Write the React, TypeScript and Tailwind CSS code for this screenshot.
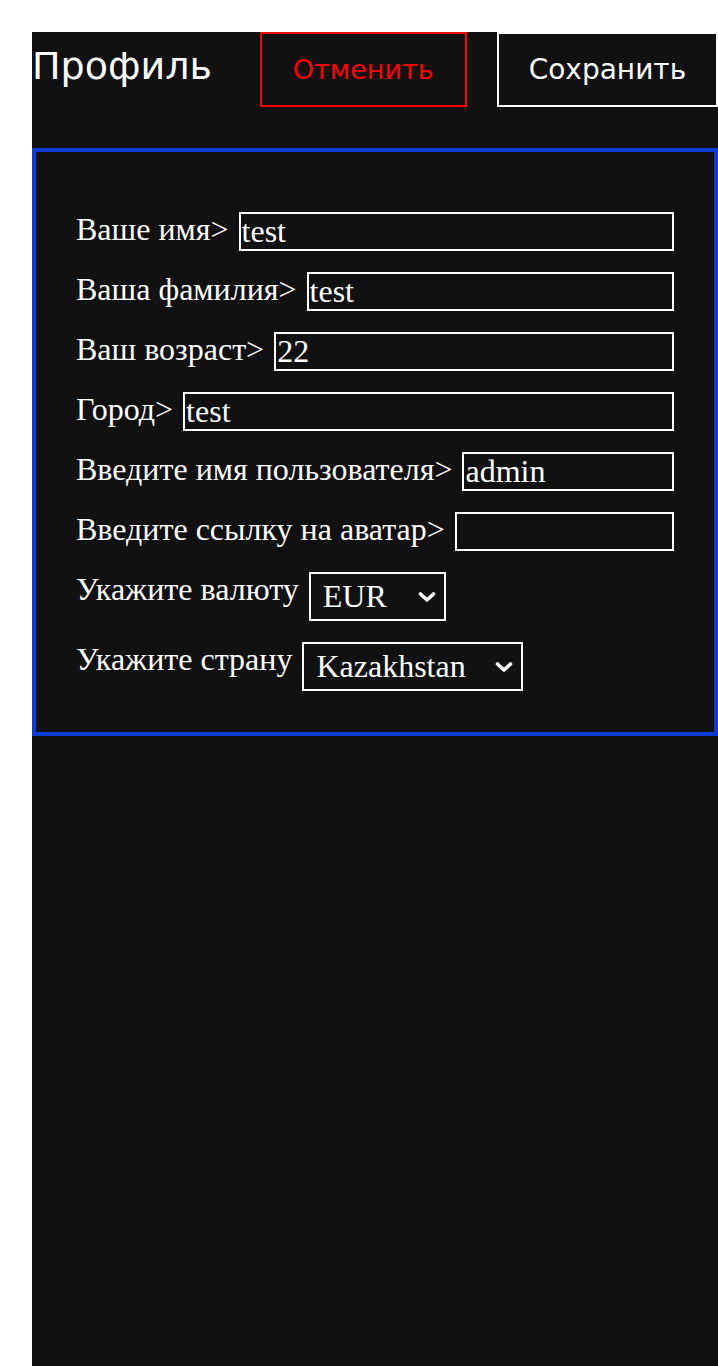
import { useState } from 'react';

interface Field {
  id: string;
  label: string;
  value: string;
}

const initialFields: Field[] = [
  { id: 'firstName', label: 'Ваше имя>', value: 'test' },
  { id: 'lastName', label: 'Ваша фамилия>', value: 'test' },
  { id: 'age', label: 'Ваш возраст>', value: '22' },
  { id: 'city', label: 'Город>', value: 'test' },
  { id: 'username', label: 'Введите имя пользователя>', value: 'admin' },
  { id: 'avatar', label: 'Введите ссылку на аватар>', value: '' },
];

const currencies = ['EUR', 'USD', 'KZT', 'RUB'];
const countries = ['Kazakhstan', 'Russia', 'Germany', 'France'];

function Chevron() {
  return (
    <svg
      viewBox="0 0 18 11"
      className="pointer-events-none absolute right-[10px] top-1/2 h-[11px] w-[18px] -translate-y-1/2"
    >
      <path
        d="M2.5 2.5 L9 8.5 L15.5 2.5"
        fill="none"
        stroke="white"
        strokeWidth="3.6"
        strokeLinecap="round"
        strokeLinejoin="round"
      />
    </svg>
  );
}

export default function App() {
  const [fields, setFields] = useState<Field[]>(initialFields);
  const [currency, setCurrency] = useState('EUR');
  const [country, setCountry] = useState('Kazakhstan');

  const updateField = (id: string, value: string) => {
    setFields(fields.map((f) => (f.id === id ? { ...f, value } : f)));
  };

  return (
    <div className="min-h-screen bg-white pl-8 pt-8">
      <div className="min-h-[1334px] bg-[#111111] text-white">
        {/* Header */}
        <div className="flex items-baseline font-['DejaVu_Sans',sans-serif]">
          <h1 className="text-[38px] leading-[normal] font-normal">Профиль</h1>
          <button
            type="button"
            className="ml-[48px] border-2 border-[#ff0000] px-[31px] py-5 font-['DejaVu_Sans',sans-serif] text-[27px] leading-[normal] text-[#ff0000]"
          >
            Отменить
          </button>
          <button
            type="button"
            className="ml-[30px] border-2 border-white px-[30px] py-[19px] font-['DejaVu_Sans',sans-serif] text-[28px] leading-[normal] text-white"
          >
            Сохранить
          </button>
        </div>

        {/* Form */}
        <form
          onSubmit={(e) => e.preventDefault()}
          className="mt-[41px] border-4 border-[#0b3bd0] px-10 pb-[41px] pt-[39px] font-['Liberation_Serif',serif] text-[32px] leading-[35px]"
        >
          {fields.map((field) => (
            <div key={field.id} className="mt-[21px] flex items-start">
              <label htmlFor={field.id} className="mr-[10px] whitespace-nowrap">
                {field.label}
              </label>
              <input
                id={field.id}
                type="text"
                value={field.value}
                onChange={(e) => updateField(field.id, e.target.value)}
                className="h-[39px] min-w-0 flex-1 border-2 border-white bg-transparent px-[1px] py-0 font-['Liberation_Serif',serif] text-[32px] leading-[35px] text-white outline-none"
              />
            </div>
          ))}

          <div className="mt-[21px] flex items-start">
            <label htmlFor="currency" className="mr-[10px] whitespace-nowrap">
              Укажите валюту
            </label>
            <div className="relative">
              <select
                id="currency"
                value={currency}
                onChange={(e) => setCurrency(e.target.value)}
                className="h-[49px] w-[137px] appearance-none border-2 border-white bg-[#111111] py-[5px] pl-[12px] pr-8 font-['Liberation_Serif',serif] text-[32px] leading-[35px] text-white outline-none"
              >
                {currencies.map((c) => (
                  <option key={c} value={c}>
                    {c}
                  </option>
                ))}
              </select>
              <Chevron />
            </div>
          </div>

          <div className="mt-[21px] flex items-start">
            <label htmlFor="country" className="mr-[10px] whitespace-nowrap">
              Укажите страну
            </label>
            <div className="relative">
              <select
                id="country"
                value={country}
                onChange={(e) => setCountry(e.target.value)}
                className="h-[49px] w-[221px] appearance-none border-2 border-white bg-[#111111] py-[5px] pl-[12px] pr-8 font-['Liberation_Serif',serif] text-[32px] leading-[35px] text-white outline-none"
              >
                {countries.map((c) => (
                  <option key={c} value={c}>
                    {c}
                  </option>
                ))}
              </select>
              <Chevron />
            </div>
          </div>
        </form>
      </div>
    </div>
  );
}
